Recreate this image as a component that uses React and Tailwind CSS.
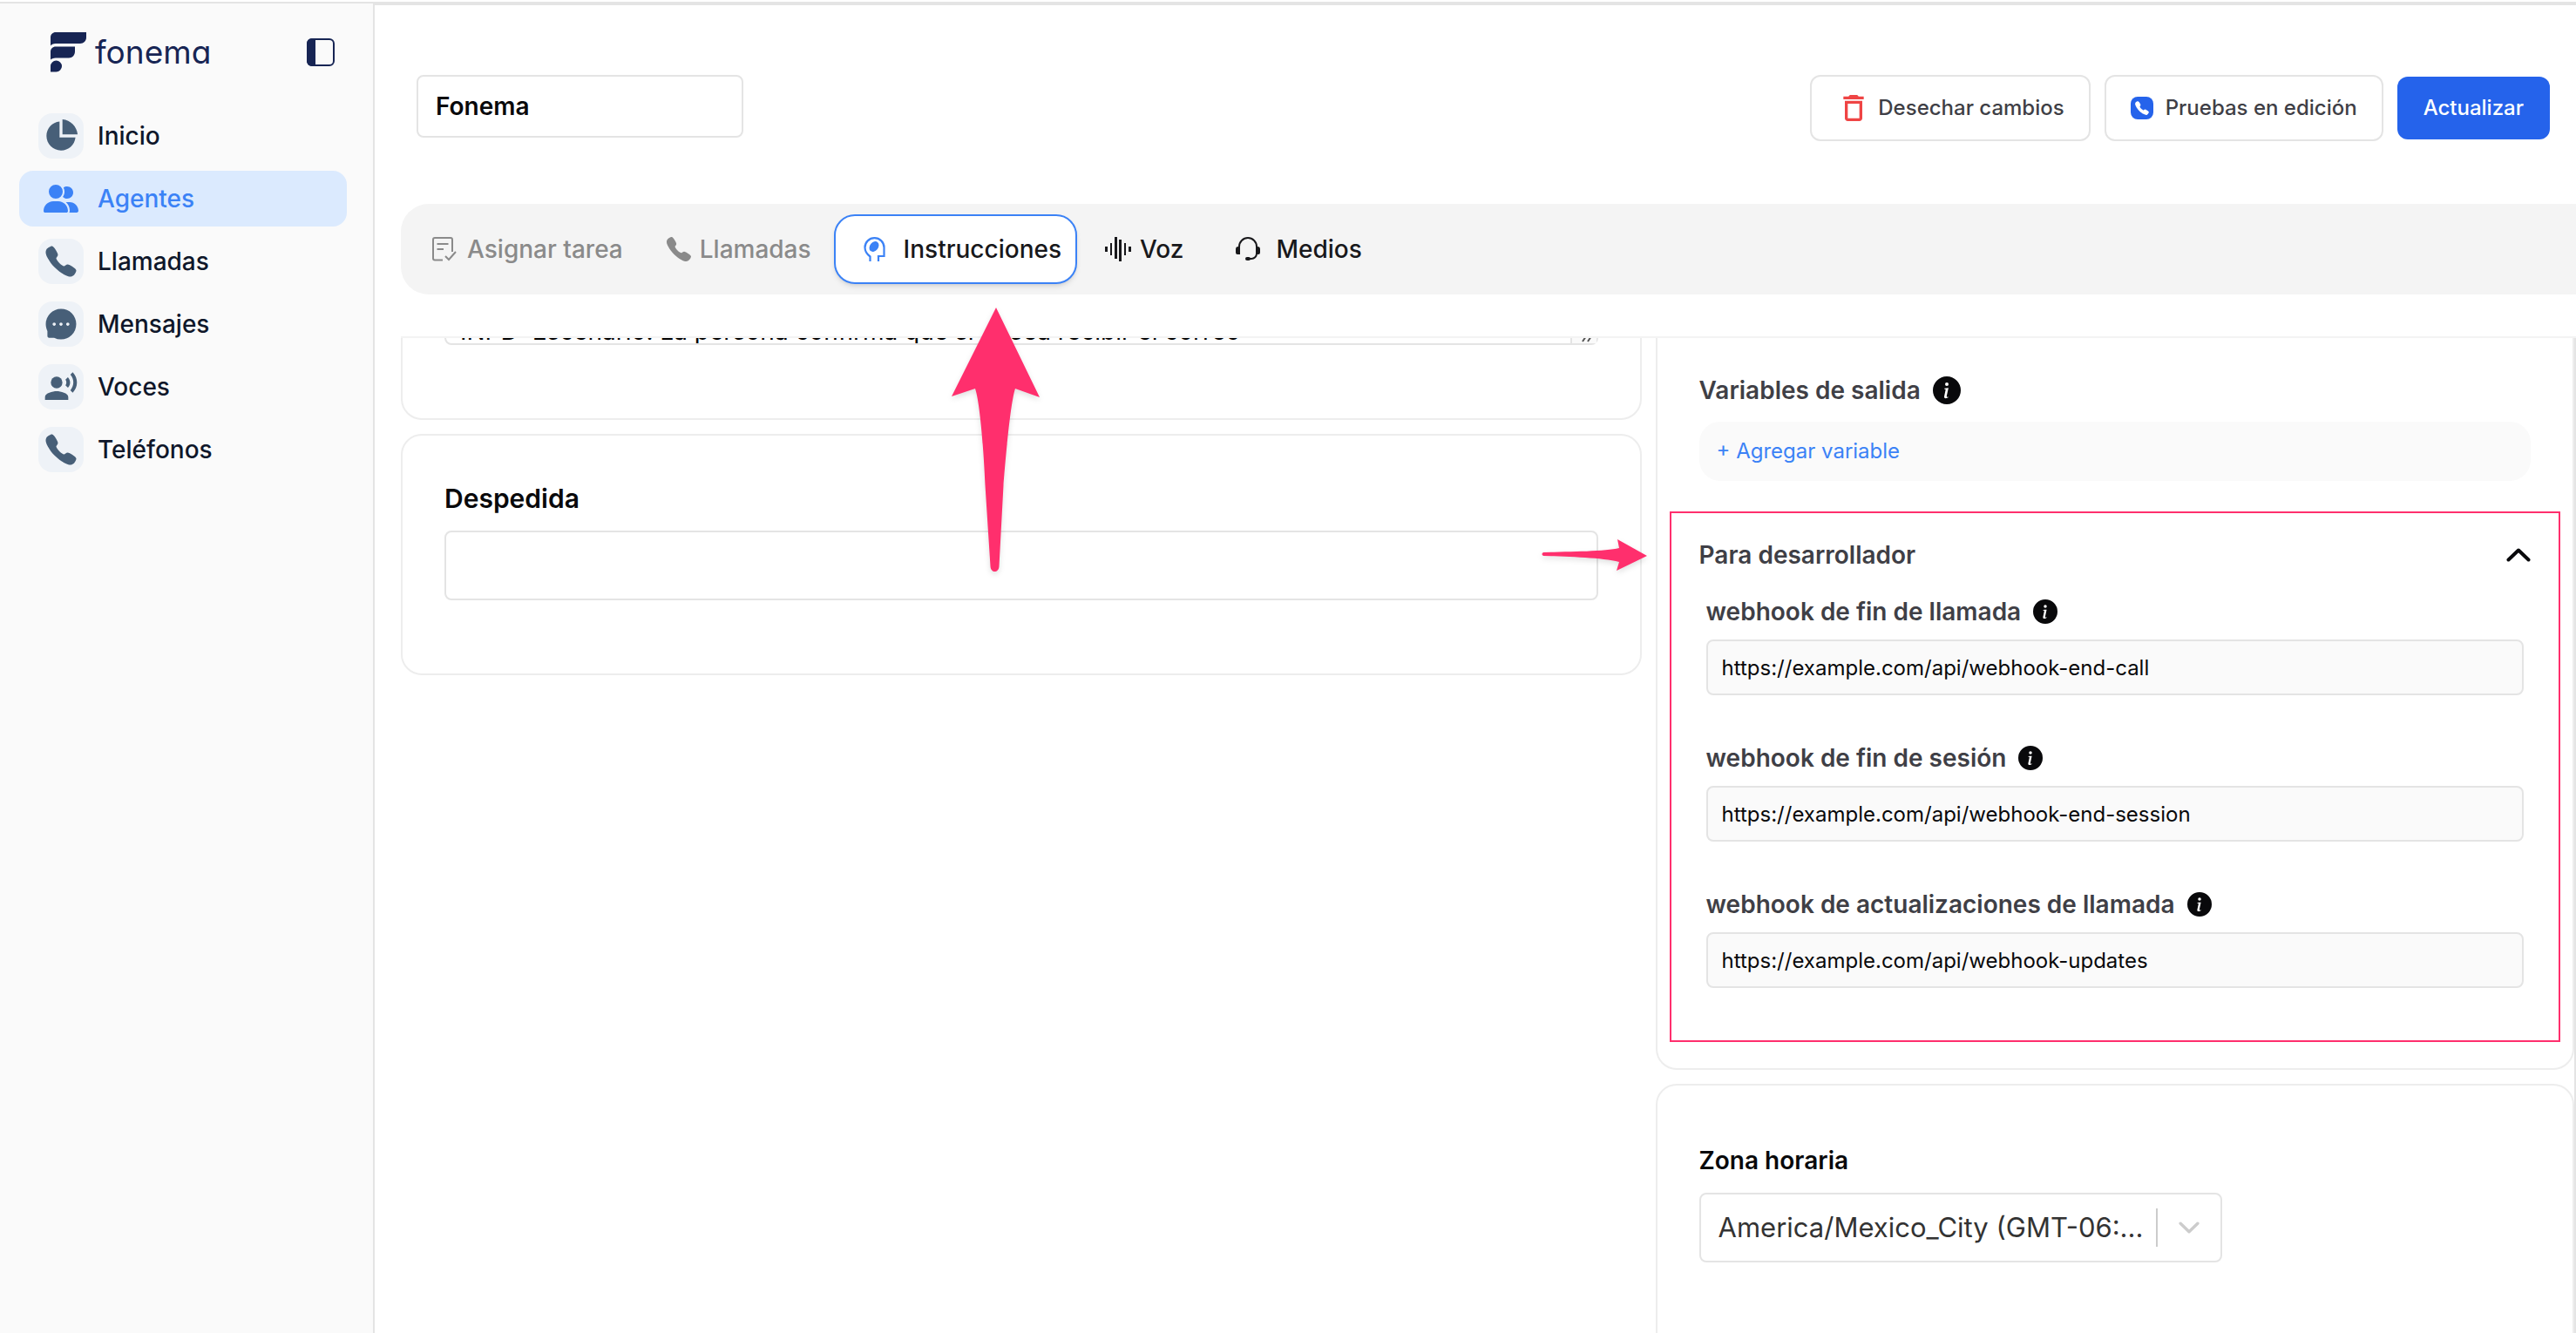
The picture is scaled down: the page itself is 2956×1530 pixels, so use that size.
import { useState } from 'react';
import { RiPieChart2Fill } from 'react-icons/ri';
import { IoCall } from 'react-icons/io5';
import { FaUserGroup } from 'react-icons/fa6';
import { AiFillMessage } from 'react-icons/ai';
import { MdRecordVoiceOver, MdDeleteOutline } from 'react-icons/md';
import { BsInfoCircleFill } from 'react-icons/bs';

const navItems = [
  { label: 'Inicio', icon: RiPieChart2Fill },
  { label: 'Agentes', icon: FaUserGroup, active: true },
  { label: 'Llamadas', icon: IoCall },
  { label: 'Mensajes', icon: AiFillMessage },
  { label: 'Voces', icon: MdRecordVoiceOver },
  { label: 'Teléfonos', icon: IoCall },
];

const webhooks = [
  { id: 'end-call', label: 'webhook de fin de llamada', url: 'https://example.com/api/webhook-end-call' },
  { id: 'end-session', label: 'webhook de fin de sesión', url: 'https://example.com/api/webhook-end-session' },
  { id: 'updates', label: 'webhook de actualizaciones de llamada', url: 'https://example.com/api/webhook-updates' },
];

function LogoMark() {
  return (
    <svg className="h-[46px] w-[41px]" viewBox="0 0 41 46" fill="#172554" aria-hidden="true">
      <path d="M6 0H41V6C41 10 38 13 34 13H6C3 13 1 14 0 15.500V6C0 2.500 2.500 0 6 0Z" />
      <path d="M6 16.500H28V22C28 26.500 25 29.500 21 29.500H6C3 29.500 1 30.500 0 31.500V22.500C0 19 2.500 16.500 6 16.500Z" />
      <path d="M6.500 32.500A6.500 6.500 0 0 1 6.500 45.500H0V39A6.500 6.500 0 0 1 6.500 32.500Z" />
    </svg>
  );
}

function PanelIcon() {
  return (
    <svg className="h-8 w-8" viewBox="0 0 32 32" fill="none" aria-hidden="true">
      <rect x="1" y="1" width="30" height="30" rx="5" stroke="#172554" strokeWidth="2" />
      <path d="M6 0H10V32H6A6 6 0 0 1 0 26V6A6 6 0 0 1 6 0Z" fill="#172554" />
    </svg>
  );
}

function TaskIcon() {
  return (
    <svg className="h-7 w-7" viewBox="0 0 28 28" fill="none" stroke="currentColor" strokeWidth="2" aria-hidden="true">
      <path d="M12 26.500H3A2 2 0 0 1 1 24.500V3A2 2 0 0 1 3 1H21A2 2 0 0 1 23 3V17" />
      <path d="M5.500 8H18.500M5.500 14H13" />
      <path d="M15 22L19 26L27 17" />
    </svg>
  );
}

function HeadIcon() {
  return (
    <svg className="h-7 w-[26px]" viewBox="0 0 26 28" aria-hidden="true">
      <path d="M7.500 28V22.500C3.500 19.500 1.500 16 1.500 12A11 10.800 0 0 1 23.500 12V22H17V28" fill="none" stroke="#3b82f6" strokeWidth="2.200" />
      <ellipse cx="12" cy="11" rx="4.800" ry="6.500" transform="rotate(38 12 11)" fill="#3b82f6" />
    </svg>
  );
}

function WaveIcon() {
  return (
    <svg className="h-7 w-[30px]" viewBox="0 0 30 28" fill="currentColor" aria-hidden="true">
      <rect x="0" y="11" width="3" height="6" />
      <rect x="6" y="7" width="2" height="14" />
      <rect x="11" y="0" width="3" height="25" />
      <rect x="16" y="3" width="3" height="25" />
      <rect x="22" y="7" width="2" height="14" />
      <rect x="27" y="11" width="3" height="6" />
    </svg>
  );
}

function HeadsetIcon() {
  return (
    <svg className="h-7 w-7" viewBox="0 0 28 28" fill="none" aria-hidden="true">
      <path d="M4 13V11A10 10 0 0 1 24 11V19A6 6 0 0 1 18 25H14" stroke="currentColor" strokeWidth="2" />
      <path d="M5 11V20H2A2 2 0 0 1 0 18V14A3 3 0 0 1 3 11ZM23 11V20H26A2 2 0 0 0 28 18V14A3 3 0 0 0 25 11Z" fill="currentColor" />
      <rect x="11" y="23" width="6" height="4" rx="2" fill="currentColor" />
    </svg>
  );
}

function Chevron({ up = false, className }) {
  return (
    <svg className={className} viewBox="0 0 28 16" fill="none" stroke="currentColor" strokeWidth="4" strokeLinecap="round" strokeLinejoin="round" aria-hidden="true">
      <path d={up ? 'M2.500 13.500L14 2.500L25.500 13.500' : 'M2.500 2.500L14 13.500L25.500 2.500'} />
    </svg>
  );
}

function Sidebar() {
  return (
    <aside className="flex w-[430px] shrink-0 flex-col border-r-2 border-[#e4e4e4] bg-[#fafafa]">
      <div className="flex h-[120px] items-start justify-between pt-[33px] pr-11 pl-[58px]">
        <div className="flex items-center gap-2.5">
          <LogoMark />
          <span className="text-[37px] leading-[46px] text-[#172554] [font-feature-settings:'cv11']">fonema</span>
        </div>
        <button type="button" aria-label="Contraer menú" className="mt-[7px]">
          <PanelIcon />
        </button>
      </div>
      <nav className="flex flex-col gap-2 pr-[30px] pl-[22px]">
        {navItems.map((item) => {
          const Icon = item.icon;
          return (
            <a
              key={item.label}
              href="#"
              className={`flex h-16 items-center gap-4 rounded-2xl pl-[22px] text-[28px] font-medium ${
                item.active ? 'bg-[#dbeafe] text-[#3b82f6]' : 'text-[#0f172a]'
              }`}
            >
              <span
                className={`flex h-[52px] w-[52px] items-center justify-center rounded-2xl ${
                  item.active ? 'text-[#3b82f6]' : 'bg-[#eef2f7] text-[#475f78]'
                }`}
              >
                <Icon className="h-10 w-10" />
              </span>
              {item.label}
            </a>
          );
        })}
      </nav>
    </aside>
  );
}

function Header() {
  const [name, setName] = useState('Fonema');
  return (
    <header className="flex items-start justify-between pt-20 pr-[30px] pl-12">
      <input
        aria-label="Nombre del agente"
        value={name}
        onChange={(e) => setName(e.target.value)}
        className="h-[72px] w-[375px] rounded-lg border-2 border-[#e4e4e4] bg-white px-5 text-[28px] font-semibold text-[#09090b]"
      />
      <div className="flex items-center gap-4 text-[24px] font-medium text-[#3f3f46]">
        <button type="button" className="flex h-[76px] items-center gap-2 rounded-xl border-2 border-[#e4e4e4] px-7">
          <MdDeleteOutline className="h-10 w-10 text-[#ef4444]" />
          Desechar cambios
        </button>
        <button type="button" className="flex h-[76px] items-center gap-3.5 rounded-xl border-2 border-[#e4e4e4] px-7">
          <span className="flex h-[26px] w-[26px] items-center justify-center rounded-lg bg-[#2563eb] text-white">
            <IoCall className="h-[18px] w-[18px]" />
          </span>
          Pruebas en edición
        </button>
        <button type="button" className="h-[72px] rounded-xl bg-[#2563eb] px-[30px] text-white">
          Actualizar
        </button>
      </div>
    </header>
  );
}

function Tabs() {
  return (
    <div className="mt-[72px] pl-[30px]">
      <div role="tablist" className="flex h-[104px] items-center rounded-l-[32px] bg-[#f4f4f4] pl-9 text-[28px] font-medium text-[#18181b]">
        <button type="button" role="tab" className="flex items-center gap-3 text-[#8a8a8a]">
          <TaskIcon />
          Asignar tarea
        </button>
        <button type="button" role="tab" className="ml-12 flex items-center gap-2 text-[#8a8a8a]">
          <IoCall className="h-8 w-8" />
          Llamadas
        </button>
        <div className="relative z-10 ml-[26px]">
          <button
            type="button"
            role="tab"
            aria-selected="true"
            className="flex h-20 items-center gap-5 rounded-3xl border-2 border-[#3b82f6] bg-white pr-4 pl-8 shadow-md"
          >
            <HeadIcon />
            Instrucciones
          </button>
          <UpArrow />
        </div>
        <button type="button" role="tab" className="ml-8 flex items-center gap-2.5">
          <WaveIcon />
          Voz
        </button>
        <button type="button" role="tab" className="ml-[60px] flex items-center gap-[18px]">
          <HeadsetIcon />
          Medios
        </button>
      </div>
    </div>
  );
}

function UpArrow() {
  return (
    <svg className="pointer-events-none absolute top-[106px] left-[134px] h-[308px] w-[104px] drop-shadow-md" viewBox="0 0 104 308" fill="#ff2f6d" aria-hidden="true">
      <path d="M52 1L102 104L74 94C68 112 62 185 60.500 205L55.500 298C55 306 46 306 45.500 298L39.500 205C38 170 34 112 28 94L1 103Z" />
    </svg>
  );
}

function RightArrow() {
  return (
    <svg className="pointer-events-none absolute top-[29px] right-full mr-7 h-10 w-[122px] drop-shadow-md" viewBox="0 0 122 40" fill="#ff2f6d" aria-hidden="true">
      <path d="M3 16C35 15 75 15 90 11L88 1L122 20L87 37L90 27C70 22 35 21 3 20C1 19 1 17 3 16Z" />
    </svg>
  );
}

function MessagesColumn() {
  return (
    <div className="flex min-w-0 flex-col gap-4">
      <section className="h-[134px] rounded-b-3xl border-2 border-t-0 border-[#ededed] px-12">
        <div className="relative">
          <textarea
            aria-label="Instrucciones del escenario"
            defaultValue="INPD: Escenario: La persona confirma que sí desea recibir el correo"
            className="block h-12 w-full resize-none overflow-hidden rounded-b-lg border-2 border-[#e4e4e4] px-4 pt-3.5 text-[28px] leading-8 text-black"
          />
          <svg className="absolute right-0.5 bottom-0.5 h-7 w-[30px]" viewBox="0 0 30 28" fill="none" aria-hidden="true">
            <rect width="30" height="28" fill="#fafafa" />
            <path d="M1 0V28" stroke="#e4e4e4" strokeWidth="2" />
            <path d="M14 26L20 17M20 26L26 17" stroke="#555" strokeWidth="2" />
          </svg>
        </div>
      </section>
      <section className="h-[277px] rounded-3xl border-2 border-[#ededed] px-12 pt-[52px]">
        <label htmlFor="despedida" className="block text-[30px] leading-10 font-semibold text-[#09090b]">
          Despedida
        </label>
        <input id="despedida" className="mt-[17px] h-20 w-full rounded-lg border-2 border-[#e4e4e4] px-4 text-[28px]" />
      </section>
    </div>
  );
}

function WebhookField({ hook }) {
  return (
    <div className="h-[168px] px-2">
      <div className="flex items-center gap-3.5">
        <label htmlFor={hook.id} className="text-[28px] leading-9 font-semibold">
          {hook.label}
        </label>
        <BsInfoCircleFill className="h-7 w-7 text-[#09090b]" />
      </div>
      <input
        id={hook.id}
        defaultValue={hook.url}
        className="mt-3.5 h-16 w-full rounded-lg border-2 border-[#e4e4e4] bg-[#fafafa] px-4 text-[24px] text-[#09090b]"
      />
    </div>
  );
}

function SettingsColumn() {
  return (
    <div className="flex min-w-0 flex-col gap-4">
      <section className="rounded-b-3xl border-2 border-t-0 border-[#ededed] px-3.5 pt-20 pb-[30px] text-[#3f3f46]">
        <div className="px-[34px]">
          <div className="flex items-center gap-3.5">
            <h2 className="text-[28px] leading-10 font-semibold">Variables de salida</h2>
            <BsInfoCircleFill className="h-8 w-8 text-[#09090b]" />
          </div>
          <div className="mt-4 flex h-[68px] items-center rounded-3xl bg-[#fafafa] px-5">
            <button type="button" className="text-[24px] text-[#3b82f6]">
              + Agregar variable
            </button>
          </div>
        </div>
        <div className="relative mt-[35px] h-[609px] border-2 border-[#ff2f6d] px-8 pt-7">
          <RightArrow />
          <button type="button" aria-expanded="true" className="flex w-full items-center justify-between pb-[27px]">
            <span className="text-[28px] leading-10 font-semibold">Para desarrollador</span>
            <Chevron up className="h-4 w-7 text-[#09090b]" />
          </button>
          {webhooks.map((hook) => (
            <WebhookField key={hook.id} hook={hook} />
          ))}
        </div>
      </section>
      <section className="h-[400px] shrink-0 rounded-3xl border-2 border-[#ededed] px-12 pt-[66px]">
        <label htmlFor="timezone" className="block text-[28px] leading-10 font-semibold text-[#09090b]">
          Zona horaria
        </label>
        <div className="relative mt-[17px] w-[600px]">
          <select
            id="timezone"
            className="h-20 w-full appearance-none rounded-lg border-2 border-[#e4e4e4] bg-white pr-20 pl-5 text-[31px] text-[#333333]"
          >
            <option>America/Mexico_City (GMT-06:...</option>
          </select>
          <div className="pointer-events-none absolute inset-y-[18px] right-0 flex w-[76px] items-center border-l-2 border-[#cccccc] pl-6">
            <Chevron className="h-[14px] w-6 text-[#cccccc]" />
          </div>
        </div>
      </section>
    </div>
  );
}

export default function App() {
  return (
    <div className="h-screen overflow-hidden bg-white pt-0.5 font-['Inter',sans-serif]">
      <div className="flex h-full border-t-2 border-[#e4e4e4]">
        <Sidebar />
        <main className="flex min-w-0 flex-1 flex-col border-t-2 border-[#e4e4e4]">
          <Header />
          <Tabs />
          <div className="mt-12 ml-[30px] flex-1 overflow-hidden border-t-2 border-[#f3f3f3]">
            <div className="-mt-10 grid grid-cols-[27fr_20fr] items-start gap-4 border-r-2 border-[#e4e4e4]">
              <MessagesColumn />
              <SettingsColumn />
            </div>
          </div>
        </main>
      </div>
    </div>
  );
}
